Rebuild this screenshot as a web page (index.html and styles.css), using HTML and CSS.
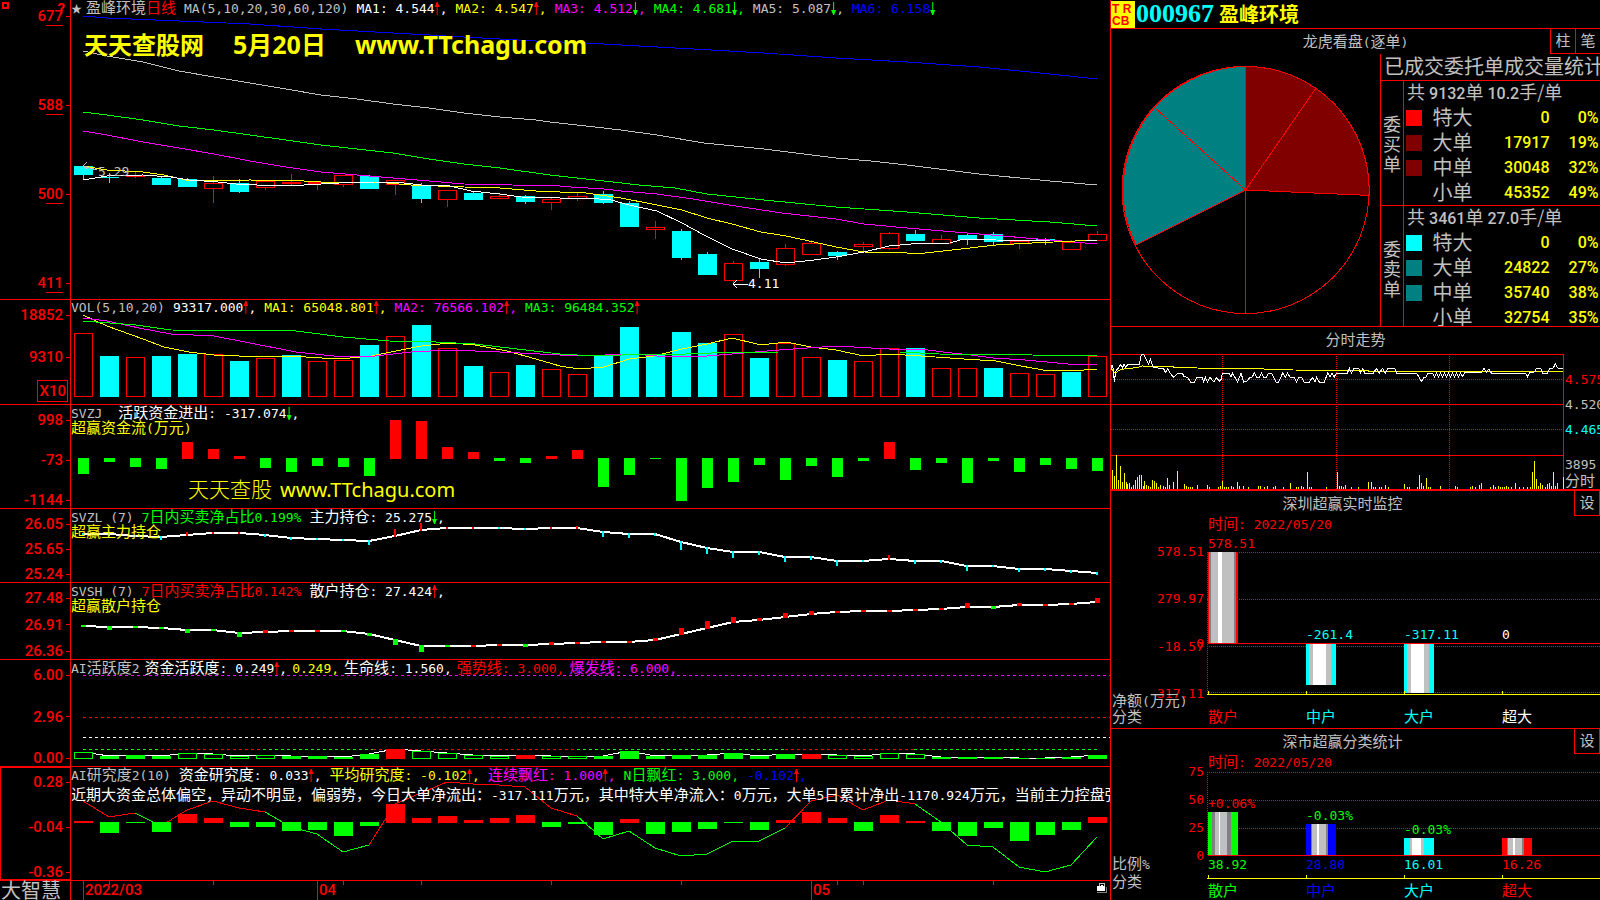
FILE: index.html
```
<!DOCTYPE html>
<html lang="zh-CN">
<head>
    <meta charset="UTF-8">
    <meta name="viewport" content="width=device-width, initial-scale=1.0">
    <title>盈峰环境 000967 日线</title>
    <link rel="stylesheet" href="styles.css">
</head>
<body>
    <main class="charts">
        <section class="panel">
            <div class="axis axis-price">
                <span class="window-mark"></span>
                <span class="help-mark">?</span>
                <span class="tick">6<u>77</u></span>
                <span class="tick">5<u>88</u></span>
                <span class="tick">5<u>00</u></span>
                <span class="tick">4<u>11</u></span>
            </div>
            <div class="plot">
                <svg id="kline" viewBox="71 0 1039 299" preserveAspectRatio="none"></svg>
                <div class="legend">
                    <span class="stock silver"><i class="star">★</i>盈峰环境<span class="red">日线</span></span>
                    <span class="num silver">MA(5,10,20,30,60,120)</span>
                    <span class="num white">MA1: 4.544<i class="up"></i>,</span>
                    <span class="num yellow">MA2: 4.547<i class="up"></i>,</span>
                    <span class="num magenta">MA3: 4.512<i class="down"></i>,</span>
                    <span class="num green">MA4: 4.681<i class="down"></i>,</span>
                    <span class="num silver">MA5: 5.087<i class="down"></i>,</span>
                    <span class="num blue">MA6: 6.158<i class="down"></i></span>
                </div>
                <div class="banner">
                    <span>天天查股网</span><span class="latin">5月20日</span><span class="latin">www.TTchagu.com</span>
                </div>
                <span class="note high num silver">5.29</span>
                <span class="note low num white">4.11</span>
            </div>
        </section>

        <section class="panel">
            <div class="axis axis-vol">
                <span class="tick">18852</span>
                <span class="tick">9310</span>
                <span class="unit">X10</span>
            </div>
            <div class="plot">
                <svg id="volume" viewBox="71 300 1039 104" preserveAspectRatio="none"></svg>
                <div class="legend">
                    <span class="num silver">VOL(5,10,20)</span>
                    <span class="num white">93317.000<i class="up"></i>,</span>
                    <span class="num yellow">MA1: 65048.801<i class="up"></i>,</span>
                    <span class="num magenta">MA2: 76566.102<i class="up"></i>,</span>
                    <span class="num green">MA3: 96484.352<i class="up"></i></span>
                </div>
            </div>
        </section>

        <section class="panel">
            <div class="axis">
                <span class="tick">998</span>
                <span class="tick">-73</span>
                <span class="tick">-1144</span>
            </div>
            <div class="plot">
                <svg id="flow" viewBox="71 405 1039 103" preserveAspectRatio="none"></svg>
                <div class="legend wide">
                    <span class="num silver">SVZJ</span>
                    <span class="white">活跃资金进出<span class="num">: -317.074<i class="down"></i>,</span></span>
                </div>
                <div class="subtitle yellow">超赢资金流<span class="num">(</span>万元<span class="num">)</span></div>
                <div class="watermark"><span>天天查股</span><span class="site">www.TTchagu.com</span></div>
            </div>
        </section>

        <section class="panel">
            <div class="axis">
                <span class="tick">26.05</span>
                <span class="tick">25.65</span>
                <span class="tick">25.24</span>
            </div>
            <div class="plot">
                <svg id="major" viewBox="71 509 1039 73" preserveAspectRatio="none"></svg>
                <div class="legend">
                    <span class="num silver">SVZL (7)</span>
                    <span class="green"><span class="num">7</span>日内买卖净占比<span class="num">0.199%</span></span>
                    <span class="white">主力持仓<span class="num">: 25.275<i class="down"></i>,</span></span>
                </div>
                <div class="subtitle yellow">超赢主力持仓</div>
            </div>
        </section>

        <section class="panel">
            <div class="axis">
                <span class="tick">27.48</span>
                <span class="tick">26.91</span>
                <span class="tick">26.36</span>
            </div>
            <div class="plot">
                <svg id="retail" viewBox="71 583 1039 76" preserveAspectRatio="none"></svg>
                <div class="legend">
                    <span class="num silver">SVSH (7)</span>
                    <span class="red"><span class="num">7</span>日内买卖净占比<span class="num">0.142%</span></span>
                    <span class="white">散户持仓<span class="num">: 27.424<i class="up"></i>,</span></span>
                </div>
                <div class="subtitle yellow">超赢散户持仓</div>
            </div>
        </section>

        <section class="panel">
            <div class="axis">
                <span class="tick">6.00</span>
                <span class="tick">2.96</span>
                <span class="tick">0.00</span>
            </div>
            <div class="plot">
                <svg id="active" viewBox="71 660 1039 106" preserveAspectRatio="none"></svg>
                <div class="legend tight">
                    <span class="silver"><span class="num">AI</span>活跃度<span class="num">2</span></span>
                    <span class="white">资金活跃度<span class="num">: 0.249<i class="up"></i>,</span></span>
                    <span class="num yellow">0.249,</span>
                    <span class="white">生命线<span class="num">: 1.560,</span></span>
                    <span class="red">强势线<span class="num">: 3.000,</span></span>
                    <span class="magenta">爆发线<span class="num">: 6.000,</span></span>
                </div>
            </div>
        </section>

        <section class="panel">
            <div class="axis selected">
                <span class="tick">0.28</span>
                <span class="tick">-0.04</span>
                <span class="tick">-0.36</span>
            </div>
            <div class="plot">
                <svg id="research" viewBox="71 767 1039 113" preserveAspectRatio="none"></svg>
                <div class="legend">
                    <span class="silver"><span class="num">AI</span>研究度<span class="num">2(10)</span></span>
                    <span class="white">资金研究度<span class="num">: 0.033<i class="up"></i>,</span></span>
                    <span class="yellow">平均研究度<span class="num">: -0.102<i class="up"></i>,</span></span>
                    <span class="magenta">连续飘红<span class="num">: 1.000<i class="up"></i>,</span></span>
                    <span class="green"><span class="num">N</span>日飘红<span class="num">: 3.000,</span></span>
                    <span class="num blue">-0.102<i class="up"></i>,</span>
                </div>
                <p class="comment">近期大资金总体偏空，异动不明显，偏弱势，今日大单净流出：<span class="num">-317.111</span>万元，其中特大单净流入：<span class="num">0</span>万元，大单<span class="num">5</span>日累计净出<span class="num">-1170.924</span>万元，当前主力控盘强</p>
            </div>
        </section>

        <footer class="timeline">
            <span class="brand">大智慧</span>
            <div class="months">
                <svg id="days" viewBox="71 881 1039 19" preserveAspectRatio="none"></svg>
                <span class="month">2022/03</span>
                <span class="month">04</span>
                <span class="month">05</span>
            </div>
            <svg class="lock" viewBox="0 0 12 12">
                <path d="M3 4V1h5v3" fill="none" stroke="#c0c0c0" stroke-width="1"/>
                <path d="M5 3h2" stroke="#fff"/>
                <rect x="1" y="4" width="8" height="5" fill="#fff"/>
                <path d="M1 10.500h9.500V5" fill="none" stroke="#808080"/>
            </svg>
        </footer>
    </main>

    <aside class="side">
        <header class="quote">
            <span class="badge"><b>T R</b><b>CB</b></span>
            <span class="code">000967</span>
            <h1>盈峰环境</h1>
        </header>

        <section class="box">
            <h2>龙虎看盘<span class="num">(</span>逐单<span class="num">)</span></h2>
            <div class="corner">
                <button type="button">柱</button><button type="button">笔</button>
            </div>
            <div class="orders">
                <svg class="pie" viewBox="0 0 269 272">
                    <circle cx="134.600" cy="136" r="123.600" fill="#000"/>
                    <path class="buy" d="M134.600 136V12.400A123.600 123.600 0 0 1 258.100 141.400z"/>
                    <path class="sell" d="M134.600 136L25 191A123.600 123.600 0 0 1 134.600 12.400z"/>
                    <circle cx="134.600" cy="136" r="123.600" fill="none"/>
                    <path d="M134.600 136L205 34M134.600 136L43.500 53.500M134.600 136V259.600"/>
                </svg>
                <div class="stats">
                    <h3>已成交委托单成交量统计</h3>
                    <div class="side-stat">
                        <span class="side-name">委买单</span>
                        <table>
                            <caption>共 <span class="digits">9132</span>单 <span class="digits">10.2</span>手/单</caption>
                            <tr><td><i class="swatch b1"></i></td><th>特大</th><td>0</td><td>0%</td></tr>
                            <tr><td><i class="swatch b2"></i></td><th>大单</th><td>17917</td><td>19%</td></tr>
                            <tr><td><i class="swatch b2"></i></td><th>中单</th><td>30048</td><td>32%</td></tr>
                            <tr><td></td><th>小单</th><td>45352</td><td>49%</td></tr>
                        </table>
                    </div>
                    <div class="side-stat">
                        <span class="side-name">委卖单</span>
                        <table>
                            <caption>共 <span class="digits">3461</span>单 <span class="digits">27.0</span>手/单</caption>
                            <tr><td><i class="swatch s1"></i></td><th>特大</th><td>0</td><td>0%</td></tr>
                            <tr><td><i class="swatch s2"></i></td><th>大单</th><td>24822</td><td>27%</td></tr>
                            <tr><td><i class="swatch s2"></i></td><th>中单</th><td>35740</td><td>38%</td></tr>
                            <tr><td></td><th>小单</th><td>32754</td><td>35%</td></tr>
                        </table>
                    </div>
                </div>
            </div>
        </section>

        <section class="box intraday">
            <h2>分时走势</h2>
            <div class="trend">
                <svg id="trend" viewBox="33 103 1359 405" preserveAspectRatio="none"></svg>
                <div class="trend-axis num">
                    <span class="red">4.575</span>
                    <span class="silver">4.520</span>
                    <span class="cyan">4.465</span>
                    <span class="silver vol">3895</span>
                    <span class="silver cjk">分时</span>
                </div>
            </div>
        </section>

        <section class="box corner-one">
            <h2>深圳超赢实时监控</h2>
            <div class="corner"><button type="button">设</button></div>
            <div class="bars monitor">
                <p class="time red">时间<span class="num">: 2022/05/20</span></p>
                <div class="bar-axis num red">
                    <span>578.51</span><span>279.97</span><span>-18.57</span><span>-317.11</span>
                    <i class="zero">0</i>
                </div>
                <div class="bar-plot">
                    <svg id="monitor" viewBox="0 0 393 142" preserveAspectRatio="none"></svg>
                    <div class="values num">
                        <span class="red" style="top: -11%">578.51</span>
                        <span class="cyan" style="top: 53%">-261.4</span>
                        <span class="cyan" style="top: 53%">-317.11</span>
                        <span class="white" style="top: 53%">0</span>
                    </div>
                </div>
                <div class="names silver"><span>净额<span class="num">(</span>万元<span class="num">)</span></span><span>分类</span></div>
                <div class="cats">
                    <span class="red">散户</span><span class="cyan">中户</span><span class="cyan">大户</span><span class="white">超大</span>
                </div>
            </div>
        </section>

        <section class="box corner-one">
            <h2>深市超赢分类统计</h2>
            <div class="corner"><button type="button">设</button></div>
            <div class="bars ratio">
                <p class="time red">时间<span class="num">: 2022/05/20</span></p>
                <div class="bar-axis num red">
                    <span>75</span><span>50</span><span>25</span><span>0</span>
                </div>
                <div class="bar-plot">
                    <svg id="ratio" viewBox="0 0 393 84" preserveAspectRatio="none"></svg>
                    <div class="values num">
                        <span class="red" style="top: 29%">+0.06%</span>
                        <span class="green" style="top: 43%">-0.03%</span>
                        <span class="green" style="top: 59%">-0.03%</span>
                    </div>
                </div>
                <div class="names silver"><span>比例<span class="num">%</span></span><span>分类</span></div>
                <div class="totals num">
                    <span class="green">38.92</span><span class="blue">28.80</span><span class="cyan">16.01</span><span class="red">16.26</span>
                </div>
                <div class="cats">
                    <span class="green">散户</span><span class="blue">中户</span><span class="cyan">大户</span><span class="red">超大</span>
                </div>
            </div>
        </section>
    </aside>
    <script src="charts.js"></script>
</body>
</html>
```
FILE: styles.css
```
* {
    box-sizing: border-box;
}

body {
    margin: 0;
    height: 100vh;
    display: grid;
    grid-template-columns: minmax(0, 1110fr) minmax(0, 490fr);
    grid-template-rows: minmax(0, 1fr);
    background: #000;
    color: #c0c0c0;
    font-family: "Noto Sans CJK SC", sans-serif;
    font-size: 15px;
    line-height: 15px;
    overflow: hidden;
}

h1, h2, h3, p {
    margin: 0;
    font-weight: normal;
}

i {
    font-style: normal;
}

svg {
    display: block;
    shape-rendering: crispEdges;
}

.num {
    font-family: "DejaVu Sans Mono", "Noto Sans CJK SC", monospace;
    font-size: 13px;
    white-space: pre;
}

/* digits inside a Chinese run must not push the line down */
span > .num,
.subtitle > .num,
.comment > .num,
.time > .num {
    line-height: 1px;
}

.red { color: #f00; }
.green { color: #0f0; }
.blue { color: #00f; }
.cyan { color: #0ff; }
.yellow { color: #ff0; }
.magenta { color: #f0f; }
.white { color: #fff; }
.silver { color: #c0c0c0; }

/* left: stacked indicator panels */

.charts {
    display: grid;
    grid-template-rows:
        minmax(0, 300fr) minmax(0, 105fr) minmax(0, 104fr) minmax(0, 74fr)
        minmax(0, 77fr) minmax(0, 107fr) minmax(0, 114fr) minmax(0, 19fr);
    min-width: 0;
}

.panel {
    display: grid;
    grid-template-columns: 71px minmax(0, 1fr);
    border-bottom: 1px solid #f00;
    min-height: 0;
}

.axis {
    position: relative;
    display: flex;
    flex-direction: column;
    justify-content: space-between;
    padding-top: 7px;
    border-right: 1px solid #f00;
    color: #f00;
    font-family: Roboto, "Liberation Sans", sans-serif;
    font-size: 15px;
    font-weight: 500;
    line-height: 16px;
}

.tick {
    display: flex;
    justify-content: flex-end;
    align-items: center;
}

.tick::after {
    content: "";
    width: 4px;
    height: 1px;
    margin-left: 3px;
    background: #f00;
}

.tick u {
    text-underline-offset: 4px;
    text-decoration-thickness: 1px;
}

.axis-price {
    padding: 8px 0;
}

.axis-vol {
    justify-content: flex-start;
}

.axis-vol .tick + .tick {
    margin-top: 26px;
}

.unit {
    align-self: flex-end;
    margin: 15px 2px 0 0;
    padding: 2px 1px;
    border: 1px solid #f00;
}

.selected {
    outline: 1px solid #f00;
    outline-offset: -1px;
}

.window-mark {
    position: absolute;
    top: 2px;
    left: 2px;
    width: 7px;
    height: 7px;
    border: 2px solid #f00;
}

.help-mark {
    position: absolute;
    top: 1px;
    right: 5px;
    font-weight: bold;
}

.plot {
    position: relative;
    min-width: 0;
    overflow: hidden;
}

.plot > svg {
    position: absolute;
    width: 100%;
    height: 100%;
}

.legend {
    position: relative;
    display: flex;
    align-items: baseline;
    gap: 8px;
    height: 15px;
    line-height: 13px;
    white-space: nowrap;
}

.legend > .num {
    line-height: 15px;
}

.legend.tight {
    gap: 5px;
}

.legend.wide {
    gap: 16px;
}

.subtitle,
.comment {
    position: relative;
    white-space: nowrap;
}

.subtitle {
    line-height: 13px;
}

.comment {
    margin-top: 4px;
    color: #fff;
}

.star {
    margin-right: 4px;
    font-size: 11px;
    line-height: 1px;
}

/* trend arrows after a value */
.up,
.down {
    display: inline-block;
    width: 5px;
    height: 13px;
    background: #f00;
    vertical-align: -2px;
    clip-path: polygon(2px 100%, 2px 5px, 0 5px, 2px 0, 3px 0, 5px 5px, 3px 5px, 3px 100%);
}

.down {
    background: #0f0;
    clip-path: polygon(2px 0, 3px 0, 3px 8px, 5px 8px, 3px 100%, 2px 100%, 0 8px, 2px 8px);
}

.banner {
    position: absolute;
    top: 30px;
    left: 13px;
    display: flex;
    align-items: baseline;
    gap: 29px;
    color: #ff0;
    font-family: "Noto Sans", "Noto Sans CJK SC", sans-serif;
    font-weight: bold;
    font-size: 24px;
    line-height: 28px;
    white-space: nowrap;
}

.banner .latin {
    font-size: 25px;
}

.watermark {
    position: absolute;
    top: 69px;
    left: 117px;
    display: flex;
    align-items: baseline;
    gap: 8px;
    color: #ff0;
    font-size: 21px;
    line-height: 28px;
    white-space: nowrap;
}

.watermark span:first-child {
    font-weight: 300;
}

.watermark .site {
    font-family: "Noto Sans", sans-serif;
    font-size: 20px;
}

.note {
    position: absolute;
}

.high {
    left: 27px;
    top: 164px;
}

.low {
    left: 677px;
    top: 276px;
}

.timeline {
    position: relative;
    display: grid;
    grid-template-columns: 70px minmax(0, 1fr);
}

.brand {
    padding-left: 1px;
    font-size: 20px;
    line-height: 17px;
}

.months {
    position: relative;
    display: grid;
    grid-template-columns: 234fr 494fr 299fr;
    padding-left: 12px;
    border-left: 1px solid #f00;
    color: #f00;
    font-family: Roboto, "Liberation Sans", sans-serif;
    font-size: 15px;
    font-weight: 500;
    line-height: 19px;
}

.months svg {
    position: absolute;
    width: 100%;
    height: 100%;
}

.month {
    border-left: 1px solid #f00;
    padding-left: 1px;
}

.lock {
    position: absolute;
    right: 2px;
    top: 1px;
    width: 12px;
    height: 12px;
}

/* right: quote, order statistics and small charts */

.side {
    display: grid;
    grid-template-rows: minmax(0, 29fr) minmax(0, 298fr) minmax(0, 164fr) minmax(0, 238fr) minmax(0, 171fr);
    min-width: 0;
    border-left: 1px solid #f00;
}

.quote {
    display: flex;
    align-items: center;
    border-bottom: 1px solid #f00;
}

.badge {
    display: flex;
    flex-direction: column;
    width: 24px;
    height: 27px;
    padding: 2px 1px;
    background: #ff0;
    color: #f00;
    font-family: "Liberation Sans", sans-serif;
    font-size: 12px;
    line-height: 12px;
    white-space: nowrap;
}

.code {
    margin-left: 1px;
    color: #0ff;
    font: bold 26px/28px "Liberation Serif", serif;
}

.quote h1 {
    margin-left: 5px;
    color: #ff0;
    font-size: 20px;
    font-weight: bold;
    line-height: 26px;
}

.box {
    position: relative;
    display: flex;
    flex-direction: column;
    min-height: 0;
    border-bottom: 1px solid #f00;
}

.box:last-child {
    border-bottom: 0;
}

.box h2 {
    flex: none;
    height: 24px;
    font-size: 15px;
    line-height: 23px;
    text-align: center;
}

.corner-one h2 {
    padding-right: 26px;
}

.corner {
    position: absolute;
    top: 0;
    right: 0;
    display: flex;
}

.corner button {
    width: 25px;
    height: 25px;
    padding: 0 0 3px;
    border: 1px solid #f00;
    border-width: 0 0 1px 1px;
    background: #000;
    color: #c0c0c0;
    font: inherit;
}

.corner-one .corner button {
    width: 26px;
    border-right-width: 1px;
}

.orders {
    flex: 1;
    display: grid;
    grid-template-columns: minmax(0, 269fr) minmax(0, 220fr);
    grid-template-rows: minmax(0, 1fr);
    padding-top: 1px;
    min-height: 0;
}

.pie {
    width: 100%;
    height: 100%;
    stroke: #f00;
    fill: none;
}

.pie .buy { fill: #800000; }
.pie .sell { fill: #008080; }

.stats {
    display: flex;
    flex-direction: column;
    min-height: 0;
    border-left: 1px solid #f00;
    overflow: hidden;
}

.stats h3 {
    flex: none;
    height: 27px;
    padding-left: 3px;
    border-bottom: 1px solid #f00;
    font-size: 20px;
    line-height: 23px;
    white-space: nowrap;
}

.side-stat {
    flex: none;
    display: flex;
}

.side-stat + .side-stat {
    border-top: 1px solid #f00;
}

.side-name {
    display: flex;
    align-items: center;
    width: 22px;
    padding: 0 2px;
    font-size: 18px;
    line-height: 20px;
    word-break: break-all;
}

.side-stat table {
    flex: 1;
    border-collapse: collapse;
    border-left: 1px solid #f00;
}

.side-stat caption {
    height: 24px;
    padding-left: 3px;
    border-left: 1px solid #f00;
    font-size: 18px;
    line-height: 21px;
    text-align: left;
    white-space: nowrap;
}

.digits,
.side-stat td {
    font-family: Roboto, "Liberation Sans", sans-serif;
    font-size: 16px;
    font-weight: 500;
}

.side-stat tr {
    height: 25px;
}

.side-stat th,
.side-stat td {
    padding: 0;
    line-height: 22px;
}

.side-stat th {
    width: 50px;
    padding-bottom: 2px;
    font-size: 20px;
    font-weight: normal;
    text-align: left;
}

.side-stat td {
    color: #ff0;
    text-align: right;
}

.side-stat td:first-child {
    width: 29px;
    padding-left: 2px;
    text-align: left;
}

.side-stat td:last-child {
    width: 50px;
    padding-right: 1px;
}

.swatch {
    display: block;
    width: 16px;
    height: 16px;
}

.b1 { background: #f00; }
.b2 { background: #800000; }
.s1 { background: #0ff; }
.s2 { background: #008080; }

.intraday {
    border-bottom-width: 2px;
}

.intraday h2 {
    height: 27px;
}

.trend {
    flex: 1;
    display: grid;
    grid-template-columns: minmax(0, 1fr) 36px;
    grid-template-rows: minmax(0, 1fr);
    min-height: 0;
}

.trend svg {
    width: 100%;
    height: 100%;
}

.trend-axis {
    display: flex;
    flex-direction: column;
    gap: 9px;
    padding: 18px 0 0 1px;
    line-height: 16px;
    overflow: hidden;
}

.trend-axis .vol {
    margin-top: 10px;
}

.trend-axis .cjk {
    margin-top: -9px;
    font-size: 15px;
}

/* bar boxes: axis gutter, four equal columns */

.bars {
    flex: 1;
    display: grid;
    grid-template-columns: 96px minmax(0, 1fr);
    min-height: 0;
    line-height: 16px;
}

.monitor {
    grid-template-rows: 37px minmax(0, 1fr) 34px;
}

.ratio {
    grid-template-rows: 19px minmax(0, 1fr) 44px;
}

.time {
    grid-column: 2;
    padding-left: 1px;
}

.bar-axis {
    position: relative;
    display: flex;
    flex-direction: column;
    justify-content: space-between;
    margin: -8px 0;
    padding-right: 3px;
    text-align: right;
}

.zero {
    position: absolute;
    right: 3px;
    top: 58%;
}

.bar-plot {
    position: relative;
}

.bar-plot svg {
    position: absolute;
    width: 100%;
    height: 100%;
}

.values,
.totals,
.cats {
    display: grid;
    grid-template-columns: repeat(4, 1fr);
    padding-left: 1px;
}

.values {
    position: relative;
    height: 100%;
}

.values span {
    position: relative;
}

.names {
    position: relative;
    display: flex;
    flex-direction: column;
    padding-left: 1px;
    margin-top: -2px;
    white-space: nowrap;
}

.cats {
    position: relative;
    border-top: 1px solid #ff0;
    padding-top: 13px;
}

/* small ticks on the yellow category axis */
.cats span {
    position: relative;
}

.cats span::before {
    content: "";
    position: absolute;
    left: 0;
    top: -17px;
    width: 1px;
    height: 4px;
    background: #ff0;
}

.ratio .names {
    grid-row: 3;
    gap: 2px;
    margin-top: -1px;
}

.ratio .totals {
    grid-column: 2;
    grid-row: 3;
    height: 18px;
    padding-top: 1px;
}

.ratio .cats {
    grid-column: 2;
    grid-row: 3;
    align-self: end;
    height: 22px;
    padding-top: 3px;
}

.ratio .cats span::before {
    top: -7px;
}
```
FILE: charts.js
```
const NS = 'http://www.w3.org/2000/svg';
const RED = '#f00', GREEN = '#0f0', CYAN = '#0ff', WHITE = '#fff', YELLOW = '#ff0', MAGENTA = '#f0f', BLUE = '#00f', SILVER = '#c0c0c0', GRAY = '#808080';

// one trading day every 26 units, first one at 83
const dayX = i => 83 + 26 * i;

function add(svg, tag, attrs) {
    const el = document.createElementNS(NS, tag);
    for (const key in attrs) el.setAttribute(key, attrs[key]);
    svg.appendChild(el);
    return el;
}

function rect(svg, x, y, w, h, fill) {
    add(svg, 'rect', { x, y, width: w, height: Math.max(h, 1), fill });
}

function hollow(svg, x, y, w, h, stroke) {
    add(svg, 'rect', { x: x + 0.5, y: y + 0.5, width: w - 1, height: Math.max(h - 1, 1), fill: '#000', stroke });
}

function line(svg, points, stroke, width) {
    add(svg, 'polyline', { points, fill: 'none', stroke, 'stroke-width': width || 1, 'vector-effect': 'non-scaling-stroke' });
}

function hline(svg, x1, x2, y, stroke, dash) {
    add(svg, 'line', { x1, x2, y1: y, y2: y, stroke, 'stroke-dasharray': dash || 'none', 'vector-effect': 'non-scaling-stroke' });
}

function vline(svg, x, y1, y2, stroke, dash) {
    add(svg, 'line', { x1: x, x2: x, y1, y2, stroke, 'stroke-dasharray': dash || 'none', 'vector-effect': 'non-scaling-stroke' });
}

const byDay = ys => ys.map((y, i) => dayX(i) + ',' + y).join(' ');

// K line: [up, body top, body bottom, wick top, wick bottom]
const candles = [
    [0, 166, 175, 166, 180], [0, 177, 178, 173, 183], [1, 175, 177, 172, 178], [0, 178, 185, 177, 185],
    [0, 179, 187, 178, 187], [1, 183, 189, 176, 203], [0, 183, 192, 179, 193], [1, 181, 188, 181, 190],
    [1, 182, 184, 174, 185], [1, 182, 184, 182, 190], [1, 175, 185, 175, 187], [0, 176, 189, 175, 189],
    [1, 180, 185, 180, 195], [0, 185, 199, 183, 203], [1, 190, 200, 190, 207], [0, 193, 200, 191, 200],
    [1, 196, 199, 194, 199], [0, 196, 202, 195, 204], [1, 199, 203, 198, 210], [1, 196, 199, 192, 201],
    [0, 194, 203, 191, 204], [0, 203, 227, 201, 227], [1, 227, 230, 221, 239], [0, 231, 258, 229, 260],
    [0, 254, 275, 252, 275], [1, 263, 281, 261, 284], [0, 262, 269, 258, 278], [1, 248, 265, 244, 266],
    [1, 243, 255, 240, 255], [0, 252, 256, 251, 260], [1, 244, 247, 242, 252], [1, 233, 249, 232, 250],
    [0, 234, 241, 230, 241], [1, 239, 244, 235, 244], [0, 235, 240, 233, 245], [0, 234, 242, 232, 245],
    [1, 241, 244, 241, 249], [0, 239, 240, 238, 245], [1, 242, 250, 240, 250], [1, 234, 241, 231, 241]
];

const kline = document.getElementById('kline');
candles.forEach(([up, top, bottom, high, low], i) => {
    const x = dayX(i);
    rect(kline, x, high, 1, low - high, up ? RED : CYAN);
    if (up) hollow(kline, x - 9, top, 19, bottom - top, RED);
    else rect(kline, x - 9, top, 19, bottom - top, CYAN);
});
line(kline, '83,16 107,18 179,21 250,24 321,29 393,33 464,37 536,41 586,43 621,45 693,49 764,53 836,58 907,62 979,67 1050,74 1097,79', BLUE);
line(kline, '83,51 107,56 143,62 179,71 214,77 250,83 286,89 321,95 357,99 393,104 429,108 464,113 500,117 536,120 550,122 586,126 621,130 657,135 704,143 764,149 836,158 871,161 907,165 979,174 1050,181 1097,185', SILVER);
line(kline, '83,112 107,115 143,120 179,126 214,130 250,135 286,140 321,145 357,149 393,153 429,159 464,164 500,168 550,175 604,181 639,185 675,188 707,194 764,200 836,207 907,212 979,218 1050,222 1097,226', GREEN);
line(kline, '83,131 107,135 143,142 179,148 214,154 250,161 286,167 321,172 357,175 393,178 429,181 464,184 560,186 571,187 604,189 621,191 657,194 693,199 729,205 782,213 836,219 864,224 907,228 979,234 1050,240 1097,244', MAGENTA);
line(kline, '83,166 107,170 143,172 164,175 186,180 214,181 250,180 304,181 321,182 375,182 411,185 464,187 500,188 536,191 560,192 586,193 621,198 657,205 682,210 707,218 732,224 761,232 786,236 814,242 836,247 864,252 907,253 925,253 961,249 996,245 1032,243 1097,240', YELLOW);
line(kline, '83,180 107,176 143,175 171,177 189,180 218,182 236,184 257,185 304,185 339,183 375,182 396,182 421,185 450,186 471,191 500,194 521,197 560,198 586,198 611,200 629,205 657,211 682,223 704,235 732,249 761,259 786,263 814,260 836,257 864,252 889,246 911,244 950,243 964,239 996,240 1050,241 1085,241 1097,240', WHITE);
line(kline, '87,162 83,166 88,170 83,166 97,170', SILVER);
line(kline, '737,280 733,284 737,288 733,284 748,284', WHITE);

// volume, same up / down order as its own bar colours
const volumes = [
    [1, 333], [0, 356], [1, 357], [0, 356], [0, 354], [1, 354], [0, 361], [1, 358], [0, 355], [1, 361],
    [1, 360], [0, 345], [1, 336], [0, 325], [1, 348], [0, 366], [1, 372], [0, 365], [1, 369], [1, 374],
    [0, 356], [0, 327], [0, 354], [0, 332], [0, 343], [1, 334], [0, 358], [1, 343], [1, 357], [0, 360],
    [1, 361], [1, 348], [0, 348], [1, 368], [1, 368], [0, 368], [1, 373], [1, 374], [0, 372], [1, 356]
];

const volume = document.getElementById('volume');
volumes.forEach(([up, top], i) => {
    if (up) hollow(volume, dayX(i) - 9, top, 19, 397 - top, RED);
    else rect(volume, dayX(i) - 9, top, 19, 397 - top, CYAN);
});
line(volume, '83,315 107,326 143,339 164,347 189,352 214,355 264,357 289,356 339,359 371,356 396,351 421,346 450,343 475,345 507,351 536,359 560,366 579,369 604,367 629,359 654,356 682,349 707,344 732,338 761,345 786,342 811,347 836,350 864,356 889,354 921,356 964,359 996,361 1021,366 1043,370 1071,371 1097,369', YELLOW);
line(volume, '83,318 107,321 139,328 171,334 214,336 250,343 296,352 343,357 375,356 411,352 450,350 500,352 560,355 579,356 632,354 657,356 707,356 732,354 779,350 836,346 889,349 921,349 943,352 971,355 993,358 1025,360 1068,364 1097,364', MAGENTA);
line(volume, '83,321 136,325 171,330 296,331 343,337 389,341 436,342 475,344 500,347 560,354 593,356 621,355 686,354 711,353 779,352 900,352 939,354 1032,355 1082,356 1097,355', GREEN);

// bars hanging on a base line: red above it, green below
function hanging(svg, ends, base, width) {
    ends.forEach((y, i) => {
        const x = dayX(i) - (width - 1) / 2;
        if (y < base) rect(svg, x, y, width, base + 1 - y, RED);
        else rect(svg, x, base, width, y - base, GREEN);
    });
}

hanging(document.getElementById('flow'), [
    474, 462, 467, 469, 442, 449, 456, 468, 472, 466, 467, 476, 420, 421, 447, 452, 461, 463, 456, 450,
    487, 475, 459, 501, 488, 482, 465, 480, 466, 477, 461, 442, 470, 463, 483, 461, 472, 465, 469, 471
], 458, 11);

// holding lines, marks: + up, - down
function holding(id, ys, marks, width, downColor) {
    const svg = document.getElementById(id);
    line(svg, byDay(ys), WHITE, 2);
    marks.forEach((m, i) => {
        const x = dayX(i) - Math.floor(width / 2);
        if (m > 0) rect(svg, x, ys[i] - m, width, m + 1, RED);
        if (m < 0) rect(svg, x, ys[i] - 1, width, 1 - m, downColor);
    });
}

holding('major', [
    534, 534, 536, 537, 535, 533, 533, 535, 538, 539, 540, 541, 536, 530, 528, 528, 528, 529, 528, 528,
    532, 534, 534, 542, 548, 552, 552, 557, 557, 561, 561, 559, 561, 561, 566, 566, 569, 569, 571, 573
], [
    -2, -2, -1, -3, 3, 1, 1, -2, -2, -1, -1, -4, 7, 7, 1, 1, -1, -1, 1, 2,
    -5, -4, -2, -8, -6, -6, -3, -5, -3, -5, -1, 4, -3, -2, -5, -1, -3, -2, -2, -2
], 2, CYAN);

holding('retail', [
    626, 627, 627, 628, 630, 630, 633, 632, 631, 631, 631, 634, 640, 646, 646, 646, 645, 645, 644, 643,
    642, 642, 640, 634, 628, 622, 620, 617, 614, 612, 611, 611, 610, 609, 607, 607, 605, 605, 604, 602
], [
    -1, -3, -1, -1, -3, -1, -4, 2, 1, 1, -1, -2, -5, -6, -1, 1, 1, -2, 2, 1,
    1, 1, 2, 6, 7, 5, 2, 4, 3, 1, 1, 1, 1, 1, 4, -2, 2, 1, 1, 4
], 5, GREEN);

// activity: r red, g filled green, h hollow green
const active = document.getElementById('active');
const activity = [
    752, 756, 755, 756, 753, 754, 756, 755, 756, 756, 757, 754, 749, 751, 753, 755, 756, 755, 756, 756,
    756, 751, 756, 755, 755, 753, 756, 754, 754, 755, 756, 753, 754, 757, 757, 757, 758, 758, 757, 755
];
const kinds = 'hggghhhhggggrhhhhrhhggggggggrhhhhggggggg';
hline(active, 83, 1110, 675.5, MAGENTA, '3 3');
hline(active, 83, 1110, 717.5, RED, '3 3');
hline(active, 83, 1110, 737.5, WHITE, '3 3');
[[83, 161, GREEN], [161, 263, RED], [263, 373, GREEN], [373, 577, RED], [577, 785, GREEN], [785, 914, RED], [914, 1097, GREEN]]
    .forEach(([a, b, color]) => hline(active, a, b, 749.5, color, '3 3'));
line(active, byDay(activity), WHITE);
activity.forEach((y, i) => {
    const x = dayX(i) - 9;
    if (kinds[i] === 'h') hollow(active, x, y, 19, 759 - y, GREEN);
    else rect(active, x, y, 19, 759 - y, kinds[i] === 'r' ? RED : GREEN);
});

const research = document.getElementById('research');
const degree = [
    801, 817, 813, 826, 810, 801, 808, 812, 827, 834, 852, 845, 804, 793, 782, 784, 785, 787, 808, 816,
    839, 831, 848, 856, 854, 841, 841, 828, 801, 795, 810, 800, 804, 822, 845, 847, 867, 872, 865, 837
];
[[0, 2, RED], [2, 3, GREEN], [3, 7, RED], [7, 11, GREEN], [11, 19, RED], [19, 27, GREEN], [27, 32, RED], [32, 39, GREEN]]
    .forEach(([from, to, color]) => {
        line(research, degree.slice(from, to + 1).map((y, i) => dayX(from + i) + ',' + y).join(' '), color);
    });
hanging(research, [
    821, 833, 823, 832, 814, 818, 827, 827, 831, 830, 836, 826, 804, 818, 816, 820, 818, 815, 827, 824,
    835, 819, 834, 832, 829, 823, 830, 820, 812, 818, 831, 815, 821, 831, 836, 828, 841, 835, 830, 817
], 822, 19);

const days = document.getElementById('days');
[1, 5, 10, 13, 18, 23, 29, 30, 35].forEach(i => rect(days, dayX(i), 881, 1, 4, RED));

// intraday price and volume
const trend = document.getElementById('trend');
hline(trend, 33, 1392, 105, RED);
hline(trend, 33, 1392, 179, RED, '1 1');
hline(trend, 33, 1392, 254, RED);
hline(trend, 33, 1392, 329, RED, '1 1');
hline(trend, 33, 1392, 407, RED);
[367, 709, 1048].forEach(x => vline(trend, x + 1, 103, 508, RED, '1 1'));
vline(trend, 1390, 103, 508, RED);
line(trend, '36,150 45,160 62,150 85,146 112,144 125,139 218,140 220,142 290,145 410,147 575,149 577,151 803,152 805,154 1390,154', YELLOW);
line(trend, '33,150 36,135 40,150 43,187 47,155 55,145 62,134 67,145 72,134 78,143 84,133 118,133 124,105 132,105 138,118 146,133 151,118 160,144 190,146 197,159 203,147 210,160 221,173 233,160 247,160 252,171 263,173 272,187 283,187 290,173 306,173 311,187 316,173 322,187 330,173 342,187 350,173 358,185 363,180 367,160 387,160 393,172 398,160 404,172 413,187 423,160 431,187 440,185 450,173 457,172 463,160 470,173 478,173 484,160 490,172 500,172 506,160 514,160 528,187 536,187 548,160 556,172 563,160 570,173 583,173 590,187 597,173 605,173 612,187 628,187 637,173 645,187 650,173 658,187 673,187 683,160 690,172 696,160 703,172 709,160 742,160 748,146 754,160 762,146 776,146 782,160 788,147 794,160 820,160 829,146 838,160 848,146 856,160 864,146 884,146 890,160 950,160 964,186 972,173 978,173 984,160 998,160 1004,172 1010,160 1016,172 1022,160 1028,172 1034,160 1040,172 1046,160 1052,172 1058,160 1064,172 1070,160 1076,172 1082,160 1088,171 1094,160 1144,158 1152,146 1158,158 1167,148 1174,160 1276,160 1282,172 1288,160 1302,158 1310,146 1322,146 1328,160 1342,160 1350,146 1360,145 1366,133 1372,145 1390,146', WHITE);
const ticks = '37:450 43:468 49:405 55:480 61:438 67:486 73:459 79:486 82:492 88:489 94:503 100:495 106:480 112:471 118:465 124:465 130:498 133:483 139:495 145:498 151:503 157:480 163:483 169:489 175:503 181:495 190:498 196:501 202:474 208:495 220:486 232:453 253:492 259:498 265:503 271:501 277:503 292:495 322:495 328:503 355:503 361:500 367:483 373:503 379:501 385:503 394:500 400:503 412:486 418:500 430:498 445:501 475:500 481:500 493:503 502:500 520:501 526:498 550:503 571:489 589:503 595:501 604:500 610:503 622:456 628:503 634:503 679:503 712:456 718:498 724:498 730:503 736:495 754:503 775:503 805:486 814:486 820:503 826:503 838:503 844:503 856:495 865:503 913:492 922:503 928:501 952:501 958:465 964:489 970:498 979:474 985:501 991:503 1022:498 1066:498 1072:501 1111:503 1117:498 1126:503 1138:495 1144:489 1171:503 1180:495 1186:501 1195:498 1201:503 1207:503 1213:503 1219:498 1225:501 1234:503 1246:489 1258:503 1270:503 1282:501 1291:503 1297:456 1303:423 1309:477 1315:498 1321:489 1327:495 1336:503 1342:492 1348:489 1354:498 1360:456 1366:498 1372:489 1390:471';
ticks.split(' ').forEach(t => {
    const [x, y] = t.split(':').map(Number);
    rect(trend, x - 1, y, 3, 508 - y, YELLOW);
});

// cylinder bars: stripes are [start, colour] inside a 30 wide bar
function cylinder(svg, x, top, bottom, stripes) {
    stripes.forEach(([start, color], i) => {
        const end = i + 1 < stripes.length ? stripes[i + 1][0] : 30;
        rect(svg, x + start, top, end - start, bottom - top, color);
    });
}

const monitor = document.getElementById('monitor');
[0.5, 47.5, 94.5, 140.5].forEach(y => hline(monitor, 0, 393, y, RED, '1 1'));
vline(monitor, 0.5, 0, 141, RED, '1 1');
hline(monitor, 1, 393, 91.5, RED);
cylinder(monitor, 1, 0, 91, [[0, RED], [1, GRAY], [3, SILVER], [10, WHITE], [14, SILVER], [26, GRAY], [28, RED]]);
const pale = [[0, CYAN], [3, SILVER], [7, WHITE], [20, SILVER], [25, CYAN]];
cylinder(monitor, 99, 92, 133, pale);
cylinder(monitor, 197, 92, 141, pale);

const ratio = document.getElementById('ratio');
[0.5, 28.5, 56.5].forEach(y => hline(ratio, 0, 393, y, RED, '1 1'));
vline(ratio, 0.5, 0, 84, RED, '1 1');
cylinder(ratio, 1, 40, 83, [[0, GREEN], [4, GRAY], [7, SILVER], [11, WHITE], [12, SILVER], [19, GRAY], [23, GREEN]]);
const narrow = color => [[0, color], [5, GRAY], [6, SILVER], [11, WHITE], [13, SILVER], [20, GRAY], [22, color]];
cylinder(ratio, 99, 52, 83, narrow(BLUE));
cylinder(ratio, 197, 66, 83, [[0, CYAN], [6, SILVER], [8, WHITE], [17, SILVER], [20, CYAN]]);
cylinder(ratio, 295, 66, 83, narrow(RED));
hline(ratio, 1, 393, 83.5, RED);
```
